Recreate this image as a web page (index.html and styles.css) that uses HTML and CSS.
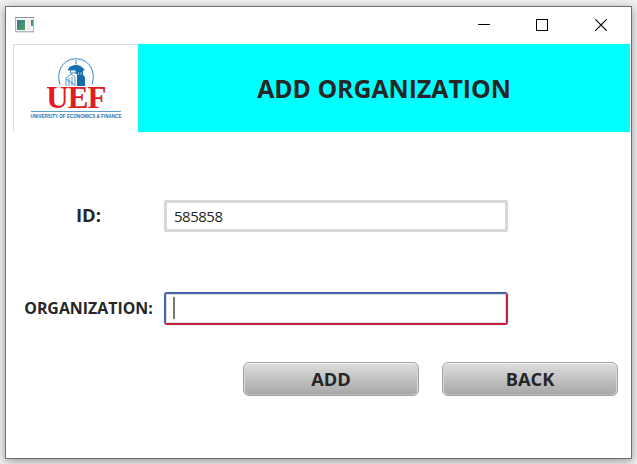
FILE: index.html
```html
<!DOCTYPE html>
<html lang="en">
<head>
<meta charset="utf-8">
<title>Add Organization</title>
<link rel="stylesheet" href="styles.css">
</head>
<body>
<main class="window">
  <div class="titlebar">
    <svg class="app-icon" width="20" height="17" viewBox="0 0 20 17">
      <defs><linearGradient id="pane" x1="0" y1="0" x2="1" y2="1"><stop offset="0" stop-color="#3a7595"/><stop offset="1" stop-color="#4da35e"/></linearGradient></defs>
      <rect x="0.5" y="0.5" width="18" height="14" fill="#f4f5f6" stroke="#b0b6bc"/>
      <path d="M0 .5H19" stroke="#90979f"/>
      <path d="M1 15.500H19" stroke="#e2e2e2"/>
      <rect x="2" y="3" width="8" height="10" fill="url(#pane)"/>
      <rect x="12" y="3" width="3" height="10" fill="#e9ebec"/>
      <rect x="16" y="3" width="2" height="6" fill="url(#pane)"/>
    </svg>
    <div class="controls">
      <svg width="12" height="12" viewBox="0 0 12 12"><path d="M0 5.5H12" stroke="#000"/></svg>
      <svg width="12" height="12" viewBox="0 0 12 12"><rect x=".5" y=".5" width="11" height="11" fill="none" stroke="#000"/></svg>
      <svg class="close" width="12" height="12" viewBox="0 0 12 12"><path d="M.3.3 11.7 11.7M11.7.3.3 11.7" stroke="#000" stroke-width="1.15"/></svg>
    </div>
  </div>
  <header class="header">
    <div class="logo">
      <svg class="emblem" width="38" height="28" viewBox="0 0 38 28">
        <path d="M3 26.500C-1.500 12 7 .8 19 .8S39.500 12 35 26.500" fill="none" stroke="#2c83c4" stroke-width="1"/>
        <path d="M19 2V6M11 12 13 9 19 7 24 8.500 27.500 12Z" fill="#176fae" stroke="#176fae" stroke-width=".8"/>
        <path d="M13.500 12H19V15H13.500Z" fill="#d9edf8" stroke="#247bb7" stroke-width=".8"/>
        <path d="M19 11H26V17L28 19V28H20V16H19Z" fill="#126bad"/>
        <path d="M9 28V20L14 16 18 19V28M12 28V20M15 28V19M9 21 18 27" fill="none" stroke="#398bc2" stroke-width=".9"/>
        <path d="M21.500 14V17M24 14V17" stroke="#8fc2e2"/>
      </svg>
      <div class="brand">UEF</div>
      <div class="rule"></div>
      <div class="motto">UNIVERSITY OF ECONOMICS &amp; FINANCE</div>
    </div>
    <h1 class="title">ADD ORGANIZATION</h1>
  </header>
  <form class="form">
    <div class="row">
      <label class="label label-id">ID:</label>
      <div class="field">585858</div>
    </div>
    <div class="row">
      <label class="label label-org">ORGANIZATION:</label>
      <div class="field focused"><span class="caret"></span></div>
    </div>
    <div class="actions">
      <button class="btn" type="button">ADD</button>
      <button class="btn" type="button">BACK</button>
    </div>
  </form>
</main>
</body>
</html>
```
FILE: styles.css
```css
* { box-sizing: border-box; }
body {
  margin: 0;
  padding: 6px 5px 5px;
  height: 464px;
  overflow: hidden;
  background: #f0f0f0;
  color: #262626;
  font-family: "Open Sans", "Noto Sans", sans-serif;
}
.window {
  width: 627px;
  height: 453px;
  border: 1px solid #6f6f6f;
  background: #fff;
  box-shadow: 0 2px 9px rgba(0, 0, 0, .38);
}
.titlebar {
  height: 37px;
  display: flex;
  justify-content: space-between;
  padding: 10px 24px 0 9px;
}
.app-icon { display: block; }
.controls { display: flex; gap: 46px; padding-top: 2px; }
.controls svg { display: block; }
.controls .close { margin-left: 1px; }
.header { display: flex; height: 88px; margin: 0 1px 0 7px; }
.logo {
  width: 125px;
  border-top: 1px solid #dedede;
  border-left: 1px solid #dedede;
  display: flex;
  flex-direction: column;
  align-items: center;
  padding-top: 13px;
}
.emblem { display: block; flex: none; }
.brand {
  height: 22px;
  font: bold 31px/22px "Liberation Serif", serif;
  letter-spacing: -.9px;
  margin-top: 1px;
  color: #e31b23;
}
.rule { width: 90px; height: 1px; background: #5e9fce; margin-top: 2px; flex: none; }
.motto {
  font: bold 4.6px/6px "Liberation Sans", sans-serif;
  white-space: nowrap;
  color: #1c75b4;
  margin-top: 2px;
}
.title {
  flex: 1;
  margin: 0;
  background: #0ff;
  text-align: center;
  font-size: 24.8px;
  line-height: 89px;
  font-weight: 700;
}
.form { padding: 68px 13px 0 7px; }
.row { display: flex; height: 33px; margin-bottom: 59px; }
.label { width: 151px; text-align: center; font-weight: 700; line-height: 30px; white-space: nowrap; }
.label-id { font-size: 18.5px; }
.label-org { font-size: 15.9px; line-height: 33px; }
.field {
  width: 344px;
  height: 32px;
  border: 3px solid #d8d8d8;
  border-radius: 2px;
  padding-left: 7px;
  font-size: 15px;
  letter-spacing: -.5px;
  line-height: 27px;
}
.focused {
  height: 33px;
  border: 2px solid;
  border-color: #4b62ad #c7213e #c7213e #4b62ad;
  border-radius: 3px;
  padding: 3px 0 0 7px;
  box-shadow: inset 0 0 0 1px #ddd, 0 0 1px #7ca8e8;
}
.caret { display: block; width: 2px; height: 22px; background: #777; }
.actions { display: flex; justify-content: flex-end; gap: 23px; margin-top: -22px; }
.btn {
  width: 176px;
  height: 34px;
  padding: 0 0 1px;
  border: 1px solid #a2a2a2;
  border-radius: 6px;
  background: linear-gradient(#dedede, #a6a6a6);
  box-shadow: inset 0 1px 0 #f4f4f4, inset 1px 0 0 #d8d8d8, inset -1px 0 0 #d8d8d8, inset 0 -1px 0 #bcbcbc;
  color: #262626;
  font: bold 18.3px/30px "Open Sans", sans-serif;
}
```
